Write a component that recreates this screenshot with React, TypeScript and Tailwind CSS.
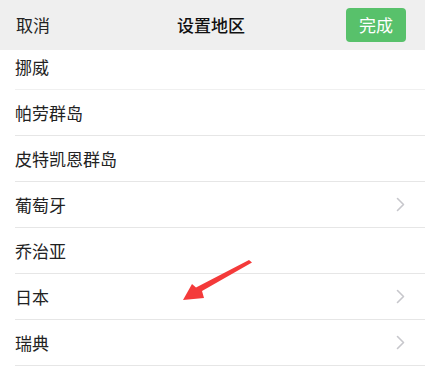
import React from 'react';

const regions = [
  { name: '帕劳群岛', more: false },
  { name: '皮特凯恩群岛', more: false },
  { name: '葡萄牙', more: true },
  { name: '乔治亚', more: false },
  { name: '日本', more: true },
  { name: '瑞典', more: true },
];

const Chevron = () => (
  <svg width="9" height="15" viewBox="0 0 9 15" fill="none" className="mr-[20px]">
    <path d="M1.5 1.5 L7.5 7.5 L1.5 13.5" stroke="#c7c7cc" strokeWidth="1.6" strokeLinecap="round" strokeLinejoin="round" />
  </svg>
);

const Row: React.FC<{ name: string; more: boolean }> = ({ name, more }) => (
  <div className="flex items-center justify-between h-[46px] border-b border-[#e6e6e6] ml-[15px]">
    <span className="text-[17px] text-[#222]">{name}</span>
    {more && <Chevron />}
  </div>
);

export default function App() {
  return (
    <div
      className="relative w-[425px] h-[374px] overflow-hidden bg-white"
      style={{ fontFamily: '"Noto Sans CJK SC", "Noto Sans", sans-serif' }}
    >
      <div className="flex items-center justify-between h-[50px] bg-[#efefef] pl-[16px] pr-[19px]">
        <span className="text-[17px] text-[#222] w-[70px]">取消</span>
        <span className="text-[17px] font-medium text-[#111]">设置地区</span>
        <div className="w-[70px] flex justify-end">
          <button className="w-[60px] h-[34px] rounded-[4px] bg-[#58c16b] text-white text-[17px] flex items-center justify-center">
            完成
          </button>
        </div>
      </div>

      <div className="flex flex-col">
        <div className="flex items-start h-[40px] border-b border-[#f0f0f0] ml-[15px] pt-[4px]">
          <span className="text-[17px] text-[#222] leading-[26px]">挪威</span>
        </div>
        {regions.map((r) => (
          <Row key={r.name} name={r.name} more={r.more} />
        ))}
      </div>

      <svg className="absolute left-0 top-0 pointer-events-none" width="425" height="374" viewBox="0 0 425 374">
        <path d="M249 260 L252 262.5 L202 291 L204 298 L183 300 L192 284 L196 287.5 Z" fill="#f43a3a" />
      </svg>
    </div>
  );
}
